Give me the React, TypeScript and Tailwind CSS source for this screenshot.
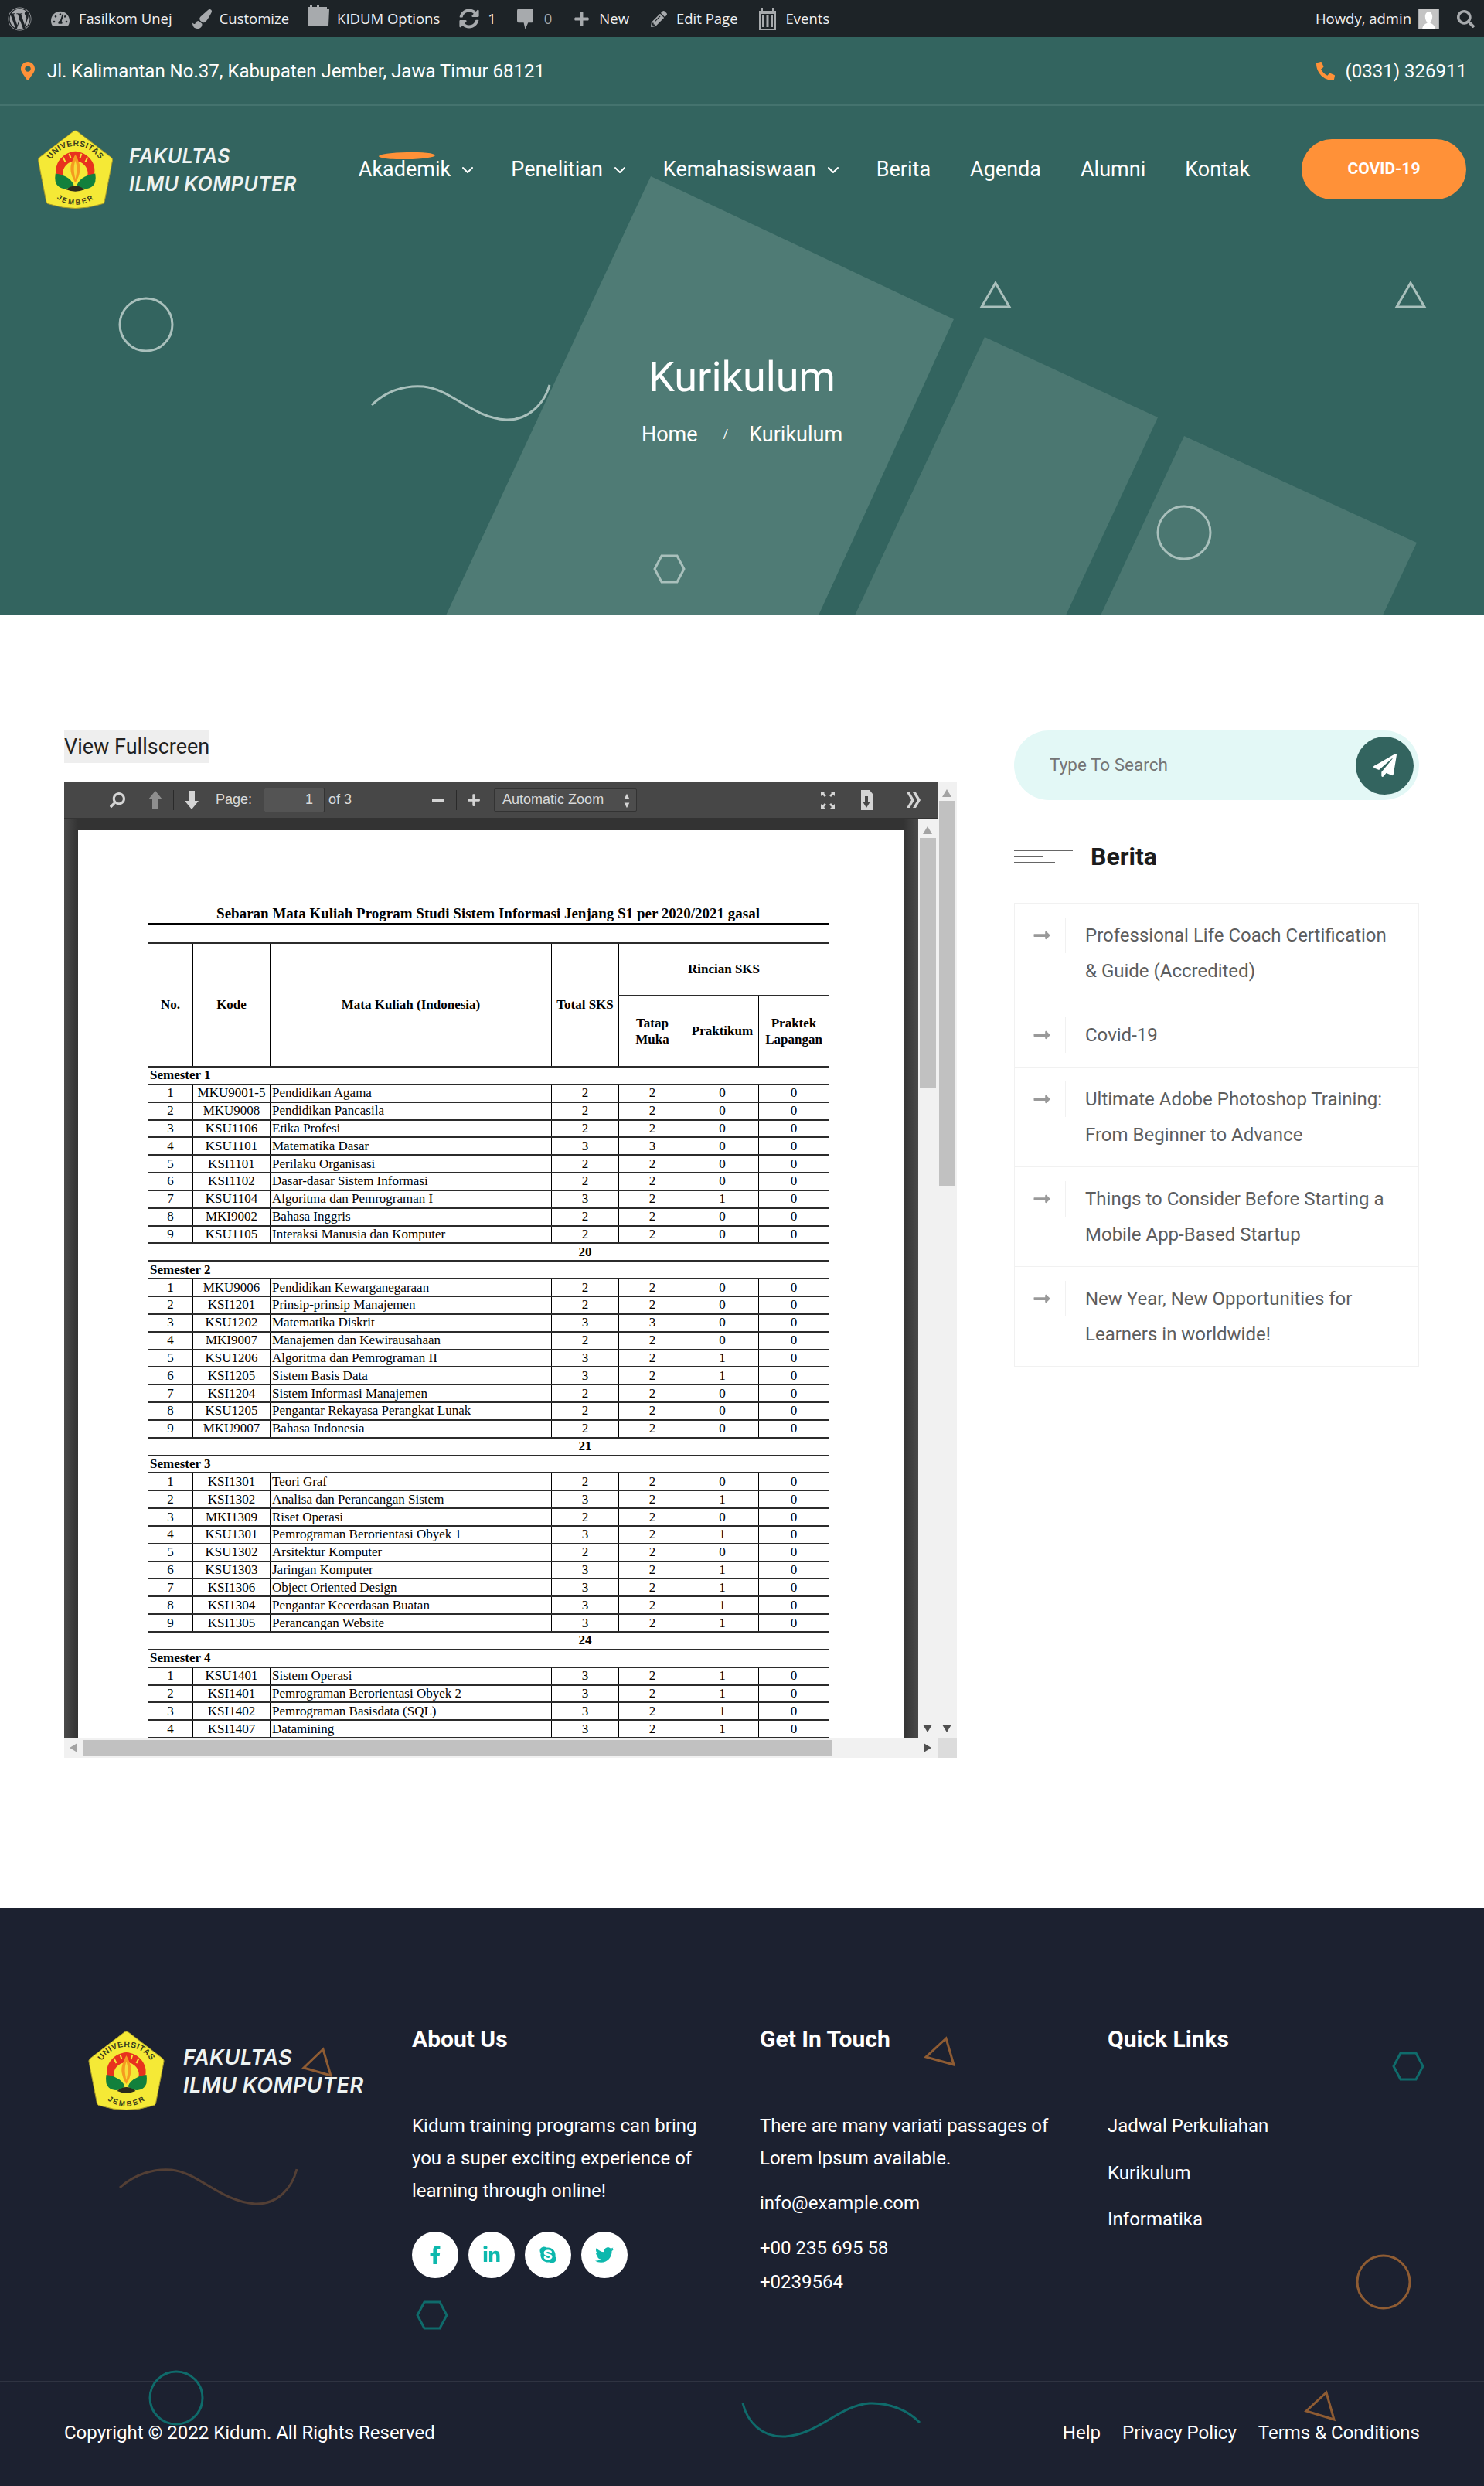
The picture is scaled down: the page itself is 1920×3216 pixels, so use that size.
import { ChevronDown } from "lucide-react";
import {
  FaWordpress,
  FaTachometerAlt,
  FaPaintBrush,
  FaSyncAlt,
  FaPlus,
  FaPencilAlt,
  FaSearch,
  FaMapMarkerAlt,
  FaPhoneAlt,
  FaPaperPlane,
  FaLongArrowAltRight,
  FaFacebookF,
  FaLinkedinIn,
  FaSkype,
  FaTwitter,
} from "react-icons/fa";

type Row = [string, string, string, string, string, string, string];

const semesters: { name: string; total?: string; rows: Row[] }[] = [
  {
    name: "Semester 1",
    total: "20",
    rows: [
      ["1", "MKU9001-5", "Pendidikan Agama", "2", "2", "0", "0"],
      ["2", "MKU9008", "Pendidikan Pancasila", "2", "2", "0", "0"],
      ["3", "KSU1106", "Etika Profesi", "2", "2", "0", "0"],
      ["4", "KSU1101", "Matematika Dasar", "3", "3", "0", "0"],
      ["5", "KSI1101", "Perilaku Organisasi", "2", "2", "0", "0"],
      ["6", "KSI1102", "Dasar-dasar Sistem Informasi", "2", "2", "0", "0"],
      ["7", "KSU1104", "Algoritma dan Pemrograman I", "3", "2", "1", "0"],
      ["8", "MKI9002", "Bahasa Inggris", "2", "2", "0", "0"],
      ["9", "KSU1105", "Interaksi Manusia dan Komputer", "2", "2", "0", "0"],
    ],
  },
  {
    name: "Semester 2",
    total: "21",
    rows: [
      ["1", "MKU9006", "Pendidikan Kewarganegaraan", "2", "2", "0", "0"],
      ["2", "KSI1201", "Prinsip-prinsip Manajemen", "2", "2", "0", "0"],
      ["3", "KSU1202", "Matematika Diskrit", "3", "3", "0", "0"],
      ["4", "MKI9007", "Manajemen dan Kewirausahaan", "2", "2", "0", "0"],
      ["5", "KSU1206", "Algoritma dan Pemrograman II", "3", "2", "1", "0"],
      ["6", "KSI1205", "Sistem Basis Data", "3", "2", "1", "0"],
      ["7", "KSI1204", "Sistem Informasi Manajemen", "2", "2", "0", "0"],
      ["8", "KSU1205", "Pengantar Rekayasa Perangkat Lunak", "2", "2", "0", "0"],
      ["9", "MKU9007", "Bahasa Indonesia", "2", "2", "0", "0"],
    ],
  },
  {
    name: "Semester 3",
    total: "24",
    rows: [
      ["1", "KSI1301", "Teori Graf", "2", "2", "0", "0"],
      ["2", "KSI1302", "Analisa dan Perancangan Sistem", "3", "2", "1", "0"],
      ["3", "MKI1309", "Riset Operasi", "2", "2", "0", "0"],
      ["4", "KSU1301", "Pemrograman Berorientasi Obyek 1", "3", "2", "1", "0"],
      ["5", "KSU1302", "Arsitektur Komputer", "2", "2", "0", "0"],
      ["6", "KSU1303", "Jaringan Komputer", "3", "2", "1", "0"],
      ["7", "KSI1306", "Object Oriented Design", "3", "2", "1", "0"],
      ["8", "KSI1304", "Pengantar Kecerdasan Buatan", "3", "2", "1", "0"],
      ["9", "KSI1305", "Perancangan Website", "3", "2", "1", "0"],
    ],
  },
  {
    name: "Semester 4",
    rows: [
      ["1", "KSU1401", "Sistem Operasi", "3", "2", "1", "0"],
      ["2", "KSI1401", "Pemrograman Berorientasi Obyek 2", "3", "2", "1", "0"],
      ["3", "KSI1402", "Pemrograman Basisdata (SQL)", "3", "2", "1", "0"],
      ["4", "KSI1407", "Datamining", "3", "2", "1", "0"],
    ],
  },
];

const news = [
  ["Professional Life Coach Certification", "& Guide (Accredited)"],
  ["Covid-19"],
  ["Ultimate Adobe Photoshop Training:", "From Beginner to Advance"],
  ["Things to Consider Before Starting a", "Mobile App-Based Startup"],
  ["New Year, New Opportunities for", "Learners in worldwide!"],
];

function Crest({ className, id }: { className: string; id: string }) {
  return (
    <svg viewBox="0 0 100 105" className={className}>
      <path
        d="M50 1 Q52 1 54 3 L97 36 Q99 38 98.500 40 L88 94 Q87 97 84 97 Q50 108 16 97 Q13 97 12 94 L1.500 40 Q1 38 3 36 L46 3 Q48 1 50 1Z"
        fill="#f5e936"
        stroke="#a89a2a"
        strokeWidth="1"
      />
      <defs>
        <path id={`${id}-top`} d="M13 58 A37 37 0 0 1 87 58" />
        <path id={`${id}-bottom`} d="M22 76 A34 34 0 0 0 78 76" />
      </defs>
      <text fontSize="10.500" fontWeight="700" fill="#3a3a1c" fontFamily="Liberation Sans, sans-serif" letterSpacing="0.6">
        <textPath href={`#${id}-top`} startOffset="50%" textAnchor="middle">
          UNIVERSITAS
        </textPath>
      </text>
      <text fontSize="9.500" fontWeight="700" fill="#3a3a1c" fontFamily="Liberation Sans, sans-serif" letterSpacing="0.8" dominantBaseline="hanging">
        <textPath href={`#${id}-bottom`} startOffset="50%" textAnchor="middle">
          JEMBER
        </textPath>
      </text>
      <path d="M25 56 C23 42 35 29 50 28 C65 29 77 42 75 56 C73 62 70 64 66 60 C68 50 60 41 50 41 C40 41 32 50 34 60 C30 64 27 62 25 56Z" fill="#e8321e" />
      <path d="M34 36 l3 6 M42 31 l2 6 M58 31 l-2 6 M66 36 l-3 6" stroke="#f5e936" strokeWidth="2" />
      <path d="M50 32 C55 42 58 48 55 58 C54 62 52 66 50 69 C48 66 46 62 45 58 C42 48 45 42 50 32Z" fill="#f59a20" />
      <path d="M50 40 C52 46 53 52 50 64 C47 52 48 46 50 40Z" fill="#f7dc3a" />
      <path d="M24 57 C32 58 44 62 48 72 C40 80 27 78 24 68 Q23 62 24 57Z" fill="#12803c" />
      <path d="M76 57 C68 58 56 62 52 72 C60 80 73 78 76 68 Q77 62 76 57Z" fill="#12803c" />
      <path d="M38 78 Q50 68 62 78 Q50 83 38 78Z" fill="#2a2a1c" />
    </svg>
  );
}

function Logo({ big }: { big?: boolean }) {
  return (
    <div className="flex items-center">
      <Crest id={big ? "crest-footer" : "crest-header"} className={big ? "w-[107px] h-[105px]" : "w-[99px] h-[104px]"} />
      <div
        className={
          big
            ? "ml-[20px] text-[27px] leading-[36px] italic font-semibold text-[#eef3f2] tracking-[0.5px] [font-family:Inter,sans-serif] whitespace-nowrap"
            : "ml-5 text-[25px] leading-[36px] italic font-semibold text-[#eef3f2] tracking-[0.5px] [font-family:Inter,sans-serif] whitespace-nowrap"
        }
      >
        <div>FAKULTAS</div>
        <div>ILMU KOMPUTER</div>
      </div>
    </div>
  );
}

function AdminBar() {
  const icon = "text-[#a7aaad] shrink-0";
  return (
    <div className="h-12 bg-[#1d2327] flex items-center text-[#f0f0f1] text-[18.500px] [font-family:'Open_Sans',sans-serif] whitespace-nowrap">
      <FaWordpress className={`${icon} ml-[10px] text-[31px]`} />
      <FaTachometerAlt className={`${icon} ml-[25px] text-[24px]`} />
      <span className="ml-3">Fasilkom Unej</span>
      <FaPaintBrush className={`${icon} ml-[26px] text-[25px]`} />
      <span className="ml-[10px]">Customize</span>
      <svg viewBox="0 0 30 26" className="ml-[23px] w-[30px] h-[26px] -mt-2 text-[#a7aaad]" fill="currentColor">
        <path d="M1 2h3V0h3v2h6V0h3v2h10v2l3 1-1 21H1z" />
      </svg>
      <span className="ml-[9px]">KIDUM Options</span>
      <FaSyncAlt className={`${icon} ml-[25px] text-[26px]`} />
      <span className="ml-[11px]">1</span>
      <svg viewBox="0 0 22 28" className="ml-[27px] w-[21px] h-[27px] text-[#a7aaad]" fill="currentColor">
        <path d="M3 0h16a3 3 0 0 1 3 3v13a3 3 0 0 1-3 3h-4l-4 9-2-9H3a3 3 0 0 1-3-3V3a3 3 0 0 1 3-3z" />
      </svg>
      <span className="ml-[14px] text-[#a7aaad]">0</span>
      <FaPlus className={`${icon} ml-[28px] text-[21px]`} />
      <span className="ml-[12px]">New</span>
      <FaPencilAlt className={`${icon} ml-[28px] text-[21px]`} />
      <span className="ml-[12px]">Edit Page</span>
      <svg viewBox="0 0 24 30" className="ml-[26px] w-6 h-[30px] text-[#a7aaad]" fill="currentColor">
        <path d="M1 5h3V1h2v4h12V1h2v4h3v25H1zM3 9v19h18V9zM5 11h3v15H5zM10.500 11h3v15h-3zM16 11h3v15h-3z" fillRule="evenodd" />
      </svg>
      <span className="ml-3">Events</span>
      <span className="ml-auto">Howdy, admin</span>
      <div className="ml-[9px] w-[27px] h-[27px] bg-[#c4c4c4] border border-[#a7aaad] flex items-end justify-center overflow-hidden">
        <svg viewBox="0 0 24 24" className="w-[25px] h-[25px]" fill="white">
          <path d="M12 3c3 0 4.500 3 4.500 6s-1.500 6-2.500 7v1c2 1 5 2 6 7H4c1-5 4-6 6-7v-1c-1-1-2.500-4-2.500-7s1.500-6 4.500-6z" />
        </svg>
      </div>
      <FaSearch className={`${icon} ml-[23px] mr-3 text-[23px]`} />
    </div>
  );
}

function HeroShapes() {
  return (
    <svg viewBox="0 0 1920 748" className="absolute inset-0 w-[1920px] h-[748px]">
      <g transform="translate(0,-48)">
        <polygon points="842,228 1234,413 1059,796 577,796" fill="#4f7b75" />
        <polygon points="1274,436 1498,540 1379,796 1106,796" fill="#4b7771" />
        <polygon points="1532,564 1833,702 1789,796 1424,796" fill="#4b7771" />
        <g fill="none" stroke="#a9c0bc" strokeWidth="3">
          <circle cx="189" cy="420" r="34" />
          <circle cx="1532" cy="689" r="34" />
          <path d="M481 524 C500 505 525 498 548 500 C585 504 610 540 655 543 C685 544 705 520 711 498" />
          <polygon points="1288,366 1306,397 1270,397" />
          <polygon points="1825,366 1843,397 1807,397" />
          <polygon points="856,719 876,719 885,736 876,753 856,753 847,736" />
        </g>
      </g>
    </svg>
  );
}

function Header() {
  const link = "text-[27px] text-white";
  const chev = "ml-[10px] -mr-[7px] w-6 h-6 text-white";
  return (
    <div className="relative h-[748px] bg-[#33645f] overflow-hidden">
      <HeroShapes />
      <div className="relative">
        <div className="h-[89px] border-b-2 border-[#44736e] flex items-center justify-between pl-[24px] pr-[22px] text-[24px] text-white">
          <div className="flex items-center">
            <FaMapMarkerAlt className="text-[#ff9138] text-[24px]" />
            <span className="ml-[13px]">Jl. Kalimantan No.37, Kabupaten Jember, Jawa Timur 68121</span>
          </div>
          <div className="flex items-center">
            <FaPhoneAlt className="text-[#ff9138] text-[24px]" />
            <span className="ml-[14px]">(0331) 326911</span>
          </div>
        </div>
        <div className="h-[163px] flex items-center pl-[48px] pr-[23px]">
          <div className="mt-[3px]">
            <Logo />
          </div>
          <nav className="mt-[2px] ml-[80px] flex items-center gap-[51px] whitespace-nowrap">
            <div className="relative flex items-center">
              <span className="absolute left-[26px] -top-[2px] h-[9px] w-[73px] bg-[#ff9138] rounded-[50%] -rotate-1" />
              <span className={`relative ${link}`}>Akademik</span>
              <ChevronDown className={chev} />
            </div>
            <div className="flex items-center">
              <span className={link}>Penelitian</span>
              <ChevronDown className={chev} />
            </div>
            <div className="flex items-center">
              <span className={link}>Kemahasiswaan</span>
              <ChevronDown className={chev} />
            </div>
            <span className={link}>Berita</span>
            <span className={link}>Agenda</span>
            <span className={link}>Alumni</span>
            <span className={link}>Kontak</span>
          </nav>
          <div className="ml-auto w-[213px] h-[78px] rounded-full bg-[#ff9138] flex items-center justify-center text-white font-bold text-[21px]">
            COVID-19
          </div>
        </div>
        <div className="flex flex-col items-center mt-[153px]">
          <h1 className="text-[54px] leading-[70px] text-white">Kurikulum</h1>
          <div className="mt-[21px] flex items-center text-[27px] leading-[36px] text-white">
            <span>Home</span>
            <span className="ml-[33px] mr-[27px] text-[16px]">/</span>
            <span>Kurikulum</span>
          </div>
        </div>
      </div>
    </div>
  );
}

function ToolIcon({ d, className }: { d: string; className?: string }) {
  return (
    <svg viewBox="0 0 20 26" className={`w-5 h-[26px] ${className ?? ""}`} fill="#d4d4d4">
      <path d={d} />
    </svg>
  );
}

function Sep() {
  return <div className="w-px h-[26px] bg-[#2a2a2a]" />;
}

function Toolbar() {
  return (
    <div className="h-12 shrink-0 bg-[#474747] border-b border-[#333] flex items-center text-[18px] text-[#d9d9d9] [font-family:'Liberation_Sans',sans-serif] whitespace-nowrap">
      <FaSearch className="ml-[59px] text-[20px] text-[#d4d4d4] -scale-x-100" />
      <ToolIcon className="ml-[29px] opacity-50" d="M10 1 L19 12 H14 V25 H6 V12 H1Z" />
      <div className="ml-[13px]"><Sep /></div>
      <ToolIcon className="ml-[13px]" d="M6 1 H14 V14 H19 L10 25 L1 14 H6Z" />
      <span className="ml-[21px]">Page:</span>
      <div className="ml-[15px] w-[79px] h-8 bg-[#545454] border border-[#333] rounded-[2px] flex items-center justify-end pr-[14px]">1</div>
      <span className="ml-[5px]">of 3</span>
      <div className="ml-[102px] w-5 flex justify-center"><div className="w-4 h-[4px] bg-[#d4d4d4]" /></div>
      <div className="ml-[13px]"><Sep /></div>
      <FaPlus className="ml-[13px] text-[18px] text-[#d4d4d4]" />
      <div className="ml-[17px] w-[185px] h-[30px] bg-[#4d4d4d] border border-[#333] rounded-[2px] flex items-center pl-[10px] relative">
        Automatic Zoom
        <svg viewBox="0 0 8 24" className="absolute right-[8px] top-[5px] w-[8px] h-[20px]" fill="#d4d4d4">
          <path d="M4 1 L8 9 H0Z M4 23 L0 15 H8Z" />
        </svg>
      </div>
      <div className="ml-auto flex items-center pr-[21px]">
        <svg viewBox="0 0 20 24" className="w-5 h-6" fill="#d4d4d4">
          <path d="M1 1h6l-2 2 3 3-2 2-3-3-2 2z M19 1v6l-2-2-3 3-2-2 3-3-2-2z M1 23v-6l2 2 3-3 2 2-3 3 2 2z M19 23h-6l2-2-3-3 2-2 3 3 2-2z" />
        </svg>
        <svg viewBox="0 0 20 26" className="ml-[30px] w-5 h-[26px]" fill="#d4d4d4">
          <path d="M3 0h11l4 5v21H3zM8 8v7H5l5 8 5-8h-3V8z" fillRule="evenodd" />
        </svg>
        <div className="ml-5"><Sep /></div>
        <svg viewBox="0 0 20 24" className="ml-5 w-5 h-6" fill="#d4d4d4">
          <path d="M1 2h4l6 10-6 10H1l6-10z M9 2h4l6 10-6 10H9l6-10z" />
        </svg>
      </div>
    </div>
  );
}

const tdNum = "border-l border-b-2 border-l-black border-b-[#2b2b2b] text-center p-0";

function PdfTable() {
  return (
    <table className="mt-[22px] w-[881px] table-fixed border-collapse text-[17px] leading-[18px] text-black [font-family:'Liberation_Serif',serif]">
      <colgroup>
        <col className="w-[58px]" />
        <col className="w-[100px]" />
        <col className="w-[364px]" />
        <col className="w-[87px]" />
        <col className="w-[87px]" />
        <col className="w-[94px]" />
        <col className="w-[91px]" />
      </colgroup>
      <thead className="font-bold">
        <tr className="h-[68px]">
          <th rowSpan={2} className={`${tdNum} border-t-2 border-t-[#2b2b2b]`}>No.</th>
          <th rowSpan={2} className={`${tdNum} border-t-2 border-t-[#2b2b2b]`}>Kode</th>
          <th rowSpan={2} className={`${tdNum} border-t-2 border-t-[#2b2b2b]`}>Mata Kuliah (Indonesia)</th>
          <th rowSpan={2} className={`${tdNum} border-t-2 border-t-[#2b2b2b]`}>Total SKS</th>
          <th colSpan={3} className={`${tdNum} border-t-2 border-t-[#2b2b2b] border-r border-r-black`}>Rincian SKS</th>
        </tr>
        <tr className="h-[92px]">
          <th className={`${tdNum} leading-[21px]`}>Tatap<br />Muka</th>
          <th className={tdNum}>Praktikum</th>
          <th className={`${tdNum} border-r border-r-black leading-[21px]`}>Praktek<br />Lapangan</th>
        </tr>
      </thead>
      <tbody>
        {semesters.map((sem) => (
          <SemesterRows key={sem.name} name={sem.name} total={sem.total} rows={sem.rows} />
        ))}
      </tbody>
    </table>
  );
}

function SemesterRows({ name, total, rows }: { name: string; total?: string; rows: Row[] }) {
  return (
    <>
      <tr className="h-[22.85px]">
        <td colSpan={7} className="border-l border-l-black border-b-2 border-b-[#2b2b2b] p-0 pl-[2px] font-bold">{name}</td>
      </tr>
      {rows.map((row) => (
        <tr key={row[1]} className="h-[22.85px]">
          <td className={tdNum}>{row[0]}</td>
          <td className={`${tdNum} whitespace-nowrap`}>{row[1]}</td>
          <td className={`${tdNum} !text-left pl-[2px] whitespace-nowrap`}>{row[2]}</td>
          <td className={tdNum}>{row[3]}</td>
          <td className={tdNum}>{row[4]}</td>
          <td className={tdNum}>{row[5]}</td>
          <td className={`${tdNum} border-r border-r-black`}>{row[6]}</td>
        </tr>
      ))}
      {total && (
        <tr className="h-[22.85px]">
          <td colSpan={3} className="border-l border-l-black border-b-2 border-b-[#2b2b2b] p-0" />
          <td className="border-b-2 border-b-[#2b2b2b] p-0 text-center font-bold">{total}</td>
          <td colSpan={3} className="border-b-2 border-b-[#2b2b2b] p-0" />
        </tr>
      )}
    </>
  );
}

function ScrollV({ thumbH, thumbTop }: { thumbH: number; thumbTop: number }) {
  return (
    <div className="relative w-[25px] bg-[#f1f1f1]">
      <svg viewBox="0 0 12 10" className="absolute left-[6px] top-[10px] w-3 h-[10px]" fill="#a3a3a3"><path d="M6 0l6 10H0z" /></svg>
      <div className="absolute left-[2px] w-[21px] bg-[#c1c1c1]" style={{ top: thumbTop, height: thumbH }} />
      <svg viewBox="0 0 12 10" className="absolute left-[6px] bottom-2 w-3 h-[10px]" fill="#505050"><path d="M0 0h12L6 10z" /></svg>
    </div>
  );
}

function PdfViewer() {
  return (
    <div className="mt-6 w-[1155px] h-[1263px] grid grid-cols-[1130px_25px] grid-rows-[1238px_25px]">
      <div className="flex flex-col overflow-hidden">
        <Toolbar />
        <div className="flex flex-1 min-h-0">
          <div className="w-[1105px] bg-[linear-gradient(90deg,#4a4a4a,#333_18px,#333_1086px,#4a4a4a)] pt-[15px] pl-[18px] pr-[19px] overflow-hidden">
            <div className="bg-white h-[1400px] px-[90px] pt-[96px]">
              <div className="w-[881px] h-[27px] border-b-[3px] border-black text-center font-bold text-[19px] leading-[24px] text-black [font-family:'Liberation_Serif',serif] whitespace-nowrap">
                Sebaran Mata Kuliah Program Studi Sistem Informasi Jenjang S1 per 2020/2021 gasal
              </div>
              <PdfTable />
            </div>
          </div>
          <ScrollV thumbTop={25} thumbH={323} />
        </div>
      </div>
      <ScrollV thumbTop={25} thumbH={498} />
      <div className="relative col-span-1 h-[25px] bg-[#f1f1f1]">
        <svg viewBox="0 0 10 12" className="absolute left-[7px] top-[6px] w-[10px] h-3" fill="#a3a3a3"><path d="M0 6l10-6v12z" /></svg>
        <div className="absolute left-[25px] top-[2px] w-[969px] h-[21px] bg-[#c1c1c1]" />
        <svg viewBox="0 0 10 12" className="absolute right-[8px] top-[6px] w-[10px] h-3" fill="#505050"><path d="M0 0l10 6-10 6z" /></svg>
      </div>
      <div className="h-[25px] bg-[#dcdcdc]" />
    </div>
  );
}

function Sidebar() {
  return (
    <aside className="w-[524px]">
      <div className="h-[90px] rounded-full bg-[#e3f8f6] flex items-center pl-[46px] pr-[7px] justify-between">
        <span className="text-[22.500px] text-[#757575]">Type To Search</span>
        <div className="w-[75px] h-[75px] rounded-full bg-[#33645f] flex items-center justify-center">
          <FaPaperPlane className="text-white text-[30px]" />
        </div>
      </div>
      <div className="mt-[53px] flex items-center">
        <div className="w-[76px] flex flex-col gap-[6px]">
          <div className="h-px bg-[#666]" />
          <div className="h-[2px] w-[38px] bg-[#666]" />
          <div className="h-px w-[53px] bg-[#666]" />
        </div>
        <h3 className="ml-[23px] text-[32px] leading-[40px] font-bold text-[#1c1c1c]">Berita</h3>
      </div>
      <ul className="mt-[40px] border border-[#f1f1f1]">
        {news.map((lines, i) => (
          <li key={lines[0]} className={`flex items-start py-[18px] ${i > 0 ? "border-t border-[#f1f1f1]" : ""}`}>
            <div className="w-[66px] h-[46px] shrink-0 flex items-center pl-[23px] border-r border-[#f1f1f1]">
              <FaLongArrowAltRight className="text-[#999] text-[24px]" />
            </div>
            <div className="ml-[25px] text-[24px] leading-[46px] text-[#5d5d5d] whitespace-nowrap">
              {lines.map((line) => (
                <div key={line}>{line}</div>
              ))}
            </div>
          </li>
        ))}
      </ul>
    </aside>
  );
}

function FooterShapes() {
  return (
    <svg viewBox="0 0 1920 748" className="absolute inset-0 w-[1920px] h-[748px] pointer-events-none">
      <g transform="translate(0,-2468)" fill="none" strokeWidth="3">
        <g stroke="#8f5c33">
          <polygon points="418,2651 393,2675 428,2685" />
          <polygon points="1224,2637 1198,2661 1234,2671" />
          <polygon points="1716,3095 1690,3119 1726,3130" />
          <circle cx="1790" cy="2952" r="34" />
        </g>
        <path stroke="#533f35" d="M155 2830 C175 2812 200 2805 222 2807 C258 2811 285 2848 330 2851 C360 2852 378 2830 384 2806" />
        <g stroke="#0f6b6b">
          <polygon points="549,2978 569,2978 578,2995 569,3012 549,3012 540,2995" />
          <polygon points="1812,2656 1832,2656 1841,2673 1832,2690 1812,2690 1803,2673" />
          <circle cx="228" cy="3102" r="34" />
          <path d="M961 3109 C967 3133 985 3153 1015 3152 C1060 3149 1085 3112 1125 3109 C1150 3108 1175 3118 1190 3134" />
        </g>
      </g>
    </svg>
  );
}

function Footer() {
  const social = "w-[60px] h-[60px] rounded-full bg-white flex items-center justify-center text-[#0db8ad] text-[24px]";
  return (
    <footer className="relative h-[748px] bg-[#1c2130] text-white text-[24px] leading-[42px] whitespace-nowrap">
      <div className="h-[612px] grid grid-cols-[450px_450px_450px_1fr] pl-[83px]">
        <div className="pt-[159px] pl-[27px]">
          <Logo big />
        </div>
        <div className="pt-[150px]">
          <h4 className="text-[30px] leading-[40px] font-bold">About Us</h4>
          <p className="mt-[71px]">
            Kidum training programs can bring<br />
            you a super exciting experience of<br />
            learning through online!
          </p>
          <div className="mt-8 flex gap-[13px]">
            <div className={social}><FaFacebookF /></div>
            <div className={social}><FaLinkedinIn /></div>
            <div className={social}><FaSkype /></div>
            <div className={social}><FaTwitter /></div>
          </div>
        </div>
        <div className="pt-[150px]">
          <h4 className="text-[30px] leading-[40px] font-bold">Get In Touch</h4>
          <p className="mt-[71px]">
            There are many variati passages of<br />
            Lorem Ipsum available.
          </p>
          <p className="mt-4">info@example.com</p>
          <p className="mt-[15px] leading-[44px]">
            +00 235 695 58<br />
            +0239564
          </p>
        </div>
        <div className="pt-[150px]">
          <h4 className="text-[30px] leading-[40px] font-bold">Quick Links</h4>
          <ul className="mt-[71px] flex flex-col gap-[18.500px]">
            <li>Jadwal Perkuliahan</li>
            <li>Kurikulum</li>
            <li>Informatika</li>
          </ul>
        </div>
      </div>
      <div className="border-t-2 border-[#2f3442] h-[136px] px-[83px] pb-1 flex items-center justify-between">
        <span>Copyright © 2022 Kidum. All Rights Reserved</span>
        <div className="flex gap-[28px]">
          <span>Help</span>
          <span>Privacy Policy</span>
          <span>Terms &amp; Conditions</span>
        </div>
      </div>
      <FooterShapes />
    </footer>
  );
}

export default function App() {
  return (
    <div className="w-[1920px] bg-white [font-family:Roboto,sans-serif]">
      <AdminBar />
      <Header />
      <main className="h-[1672px] pt-[149px] pl-[83px] flex">
        <div className="w-[1155px]">
          <span className="inline-block h-[42px] bg-[#eeeeee] text-[27px] leading-[42px] text-[#222] align-top">View Fullscreen</span>
          <PdfViewer />
        </div>
        <div className="ml-[74px]">
          <Sidebar />
        </div>
      </main>
      <Footer />
    </div>
  );
}
